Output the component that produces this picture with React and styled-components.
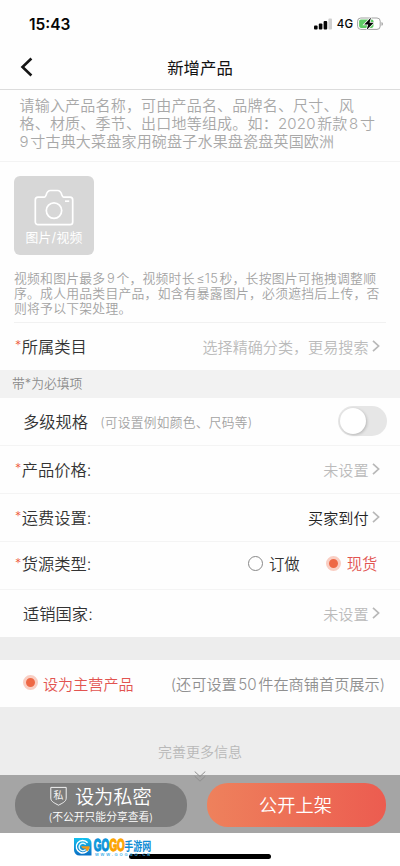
import React, { useState } from 'react';
import styled, { createGlobalStyle } from 'styled-components';

export default function App() {
  const [multi, setMulti] = useState(false);
  const [source, setSource] = useState('spot');

  return (
    <>
      <GlobalStyle />
      <Page>
        <StatusBar>
          <Time>15:43</Time>
          <StatusIcons>
            <SignalIcon />
            <Network>4G</Network>
            <BatteryIcon />
          </StatusIcons>
        </StatusBar>
        <Header>
          <BackIcon />
          <h1>新增产品</h1>
        </Header>
        <NameField>
          <p>请输入产品名称，可由产品名、品牌名、尺寸、风</p>
          <p>格、材质、季节、出口地等组成。如：2020<Gap />新款<Gap />8<Gap />寸</p>
          <p>9<Gap />寸古典大菜盘家用碗盘子水果盘瓷盘英国欧洲</p>
        </NameField>
        <Media>
          <Upload>
            <CameraIcon />
            <span>图片/视频</span>
          </Upload>
          <Hint>
            <p>视频和图片最多<Gap />9<Gap />个，视频时长<Gap />≤15<Gap />秒，长按图片可拖拽调整顺</p>
            <p>序。成人用品类目产品，如含有暴露图片，必须遮挡后上传，否</p>
            <p>则将予以下架处理。</p>
          </Hint>
        </Media>
        <Row $height={47} $noBorder>
          <Label><i>*</i>所属类目</Label>
          <Value>选择精确分类，更易搜索<ArrowIcon /></Value>
        </Row>
        <Tip>带*为必填项</Tip>
        <Row $height={48} $lift={1}>
          <Label $plain>多级规格<small>(可设置例如颜色、尺码等)</small></Label>
          <Switch $on={multi} onClick={() => setMulti(!multi)} />
        </Row>
        <Row $height={48}>
          <Label><i>*</i>产品价格:</Label>
          <Value>未设置<ArrowIcon /></Value>
        </Row>
        <Row $height={48}>
          <Label><i>*</i>运费设置:</Label>
          <Value $dark>买家到付<ArrowIcon /></Value>
        </Row>
        <Row $height={48} $lift={5}>
          <Label><i>*</i>货源类型:</Label>
          <Options>
            <Option $on={source === 'custom'} onClick={() => setSource('custom')}>
              <Radio $on={source === 'custom'} /><span>订做</span>
            </Option>
            <Option $on={source === 'spot'} onClick={() => setSource('spot')}>
              <Radio $on={source === 'spot'} /><span>现货</span>
            </Option>
          </Options>
        </Row>
        <Row $height={47} $noBorder>
          <Label $plain>适销国家:</Label>
          <Value>未设置<ArrowIcon /></Value>
        </Row>
        <MainProduct>
          <Option $on><Radio $on /><span>设为主营产品</span></Option>
          <span>(还可设置<Gap />50<Gap />件在商铺首页展示)</span>
        </MainProduct>
        <More>完善更多信息</More>
        <Actions>
          <MoreArrow />
          <PrivateButton>
            <strong><ShieldIcon />设为私密</strong>
            <span>(不公开只能分享查看)</span>
          </PrivateButton>
          <PublishButton>公开上架</PublishButton>
        </Actions>
        <Footer>
          <HomeIndicator />
          <Watermark />
        </Footer>
      </Page>
    </>
  );
}

const SignalIcon = () => (
  <svg width="18" height="12" viewBox="0 0 18 12">
    <rect x="0" y="7.4" width="3.6" height="4" rx="1" fill="#050505" />
    <rect x="4.8" y="5.4" width="3.6" height="6" rx="1" fill="#050505" />
    <rect x="9.6" y="3" width="3.6" height="8.4" rx="1" fill="#050505" />
    <rect x="14.4" y="0.4" width="3.6" height="11" rx="1" fill="#cfcfcf" />
  </svg>
);

const BatteryIcon = () => (
  <svg width="27" height="14" viewBox="0 0 27 14">
    <rect x="0.6" y="1" width="22.6" height="11.4" rx="3.2" fill="#fff" stroke="#a3a3a3" />
    <rect x="2.1" y="2.5" width="14.4" height="8.4" rx="1.8" fill="#5fcb65" />
    <path d="M24.5 5v3.8q1.4-.5 1.4-1.9T24.5 5z" fill="#999" />
    <path d="M14 .6 7.2 7.5h4L9.6 13l7.1-7.2h-4.2z" fill="#050505" stroke="#fff" strokeWidth="1.5" paintOrder="stroke" />
  </svg>
);

const BackIcon = () => (
  <svg width="14" height="20" viewBox="0 0 14 20" fill="none" stroke="#161616" strokeWidth="2.6">
    <path d="M11.4 1.5 2.5 10l8.9 8.5" />
  </svg>
);

const CameraIcon = () => (
  <svg width="40" height="38" viewBox="0 0 40 38" fill="none" stroke="#fff" strokeWidth="1.7">
    <path d="M4 8.2h6.4c1.2 0 1.3-1 1.8-2.5.9-3 1.7-4.2 4.2-4.2h7.2c2.5 0 3.3 1.2 4.2 4.2.5 1.5.6 2.5 1.8 2.5H36a2.7 2.7 0 0 1 2.7 2.7v22A2.7 2.7 0 0 1 36 35.6H4a2.7 2.7 0 0 1-2.7-2.7v-22A2.7 2.7 0 0 1 4 8.2z" />
    <circle cx="20" cy="21.6" r="7.7" />
    <path d="M31 12.2h4.2" />
  </svg>
);

const ArrowIcon = () => (
  <svg width="8" height="12" viewBox="0 0 8 12" fill="none" stroke="#b8b8b8" strokeWidth="1.7">
    <path d="m1 .8 5.6 5.2L1 11.2" />
  </svg>
);

const ShieldIcon = () => (
  <svg width="17" height="20" viewBox="0 0 17 20">
    <path d="M.8 1.4h15.4v10.8c0 3.5-4.2 5.1-7.7 7C5 17.3.8 15.7.8 12.2z" fill="none" stroke="#f2f2f2" />
    <text x="8.5" y="12.8" fill="#f2f2f2" fontSize="10" fontWeight="400" textAnchor="middle">私</text>
  </svg>
);

const Watermark = () => (
  <Logo width="80" height="22" viewBox="0 0 80 22">
    <defs>
      <linearGradient id="blue" x1="0" y1="0" x2="0" y2="1">
        <stop offset="0" stopColor="#13c0ee" />
        <stop offset="1" stopColor="#0a6fc4" />
      </linearGradient>
      <linearGradient id="gold" x1="0" y1="0" x2="0" y2="1">
        <stop offset="0" stopColor="#ffc400" />
        <stop offset="1" stopColor="#f58300" />
      </linearGradient>
    </defs>
    <path d="M1 1h12.5a5 5 0 0 1 5 5v12.5H6.5A5.5 5.5 0 0 1 1 13z" fill="url(#blue)" />
    <path d="M14.6 5.8A6.3 6.3 0 1 0 15.9 10.5" fill="none" stroke="#fff" strokeWidth="1.5" />
    <path d="M12.7 7.6A3.7 3.7 0 1 0 12.6 12.4" fill="none" stroke="#d8f7ff" strokeWidth="1.5" />
    <path d="M8 9.2h8.6c0 2.5-1 4.2-2.6 5.2l-1.5-3H9.8z" fill="#f59a16" />
    <g fontFamily="'Liberation Sans', sans-serif" fontSize="16.5" fontWeight="700">
      <text transform="translate(20.8 14.2) scale(.6 1)" fill="url(#blue)" stroke="#0d93da" strokeWidth="1.3">GO</text>
      <text transform="translate(36.4 14.2) scale(.6 1)" fill="url(#gold)" stroke="#fca400" strokeWidth="1.3">GO</text>
    </g>
    <text transform="translate(51.3 13.6) scale(.75 1)" fontSize="12" fontWeight="700" fill="#0e8bd4">手游网</text>
    <text x="22" y="18.6" fontFamily="'Liberation Sans', sans-serif" fontSize="4" fontWeight="700" textLength="55" fill="#3fb0e8">WWW.GOGGO.CN</text>
  </Logo>
);

const MoreArrow = () => (
  <DownArrow width="12" height="11" viewBox="0 0 12 11" fill="none" stroke="#8f8f8f">
    <path d="m.7.5 5.3 5 5.3-5M.7 5.2l5.3 5 5.3-5" />
  </DownArrow>
);

const GlobalStyle = createGlobalStyle`
  *{
    box-sizing: border-box;
  }
  body{
    margin: 0;
    background: #fff;
    font-family: Inter, 'Noto Sans CJK SC', sans-serif;
    font-weight: 350;
  }
  p, h1{
    margin: 0;
  }
  svg{
    display: block;
    flex: none;
  }
`

const Page = styled.div`
  width: 400px;
  height: 866px;
  overflow: hidden;
  display: flex;
  flex-direction: column;
  white-space: nowrap;
  background: #fefefe;
  > *{
    flex: none;
  }
`

const StatusBar = styled.div`
  height: 44px;
  padding: 4px 16px 0 29px;
  display: flex;
  align-items: center;
  justify-content: space-between;
  color: #050505;
`

const Time = styled.span`
  font-size: 15.5px;
  font-weight: 600;
`

const StatusIcons = styled.div`
  display: flex;
  align-items: center;
`

const Network = styled.span`
  margin: 0 4px 0 4.5px;
  font-size: 11.5px;
  font-weight: 500;
`

const Header = styled.header`
  height: 46px;
  padding: 0 20px;
  display: grid;
  grid-template-columns: 40px 1fr 40px;
  align-items: center;
  border-bottom: 1px solid #dcdcdc;
  h1{
    text-align: center;
    font-size: 16.4px;
    font-weight: 400;
    color: #111;
  }
`

const NameField = styled.div`
  height: 72px;
  padding: 7px 0 0 19.5px;
  border-bottom: 1px solid #f3f3f3;
  font-size: 15px;
  letter-spacing: .2px;
  line-height: 17.8px;
  color: #a8a8a8;
`

const Gap = styled.span`
  display: inline-block;
  width: 1.5px;
`

const Media = styled.div`
  height: 161px;
  margin: 0 14px;
  padding-top: 14px;
  border-bottom: 1px solid #f1f1f1;
`

const Upload = styled.div`
  width: 80px;
  height: 79px;
  padding-top: 13px;
  display: flex;
  flex-direction: column;
  align-items: center;
  border-radius: 6px;
  background: #d7d7d7;
  color: #fff;
  span{
    margin-top: 1.5px;
    font-size: 12.8px;
    font-weight: 400;
    line-height: 18px;
    letter-spacing: .2px;
  }
`

const Hint = styled.div`
  margin-top: 15.5px;
  font-size: 12.8px;
  letter-spacing: .26px;
  line-height: 15.3px;
  color: #a3a3a3;
`

const Row = styled.div`
  height: ${p => p.$height}px;
  padding: 0 20px 0 15px;
  padding-bottom: ${p => p.$lift ?? 2}px;
  display: flex;
  align-items: center;
  justify-content: space-between;
  border-bottom: ${p => p.$noBorder ? 'none' : '1px solid #f4f4f4'};
`

const Label = styled.div`
  display: flex;
  align-items: center;
  padding-left: ${p => p.$plain ? 8 : 0}px;
  font-size: 16.3px;
  color: #333;
  i{
    width: 6.7px;
    font-style: normal;
    font-size: 12.5px;
    color: #ee5a3a;
  }
  small{
    margin-left: 12px;
    font-size: 12.7px;
    letter-spacing: .3px;
    color: #a3a3a3;
  }
`

const Value = styled.div`
  display: flex;
  align-items: center;
  gap: 3.5px;
  font-size: 15.1px;
  color: ${p => p.$dark ? '#222' : '#bbb'};
`

const Tip = styled.div`
  height: 28px;
  padding-left: 12px;
  line-height: 27px;
  font-size: 12.8px;
  background: #f2f2f2;
  color: #8c8c8c;
`

const Switch = styled.button`
  width: 49px;
  height: 30px;
  margin-right: -7px;
  padding: 2px;
  border: none;
  border-radius: 15px;
  background: ${p => p.$on ? '#ee6a4b' : '#e6e6e6'};
  &::before{
    content: '';
    display: block;
    width: 26px;
    height: 26px;
    margin-left: ${p => p.$on ? 19 : 0}px;
    border-radius: 50%;
    background: #fff;
    box-shadow: 1px 1px 3px rgba(0, 0, 0, .2);
  }
`

const Options = styled.div`
  display: flex;
  gap: 26.5px;
  margin-right: 2.5px;
`

const Option = styled.div`
  display: flex;
  align-items: center;
  gap: 5.5px;
  font-size: 15.4px;
  color: ${p => p.$on ? '#e25450' : '#333'};
`

const Radio = styled.span`
  width: 15px;
  height: 15px;
  border-radius: 50%;
  border: ${p => p.$on ? '3px solid #f9cec3' : '1px solid #888'};
  background: ${p => p.$on ? '#ee6845' : '#fff'};
`

const MainProduct = styled.div`
  height: 70px;
  padding: 0 15px 2px 22.5px;
  border-top: 23px solid #ededed;
  display: flex;
  align-items: center;
  justify-content: space-between;
  font-size: 15.2px;
  color: #909090;
  ${Option}{
    font-size: 15.1px;
  }
`

const More = styled.div`
  height: 68px;
  padding-top: 34px;
  text-align: center;
  font-size: 14px;
  line-height: 22px;
  background: #ededed;
  color: #b8b8b8;
`

const Actions = styled.div`
  position: relative;
  height: 58px;
  padding: 8px 14px 8px 14.5px;
  display: grid;
  grid-template-columns: 172.5px 179px;
  justify-content: space-between;
  background: #a5a5a5;
`

const DownArrow = styled.svg`
  position: absolute;
  left: 194px;
  top: -4px;
`

const Button = styled.button`
  border: none;
  border-radius: 21px;
  padding: 0;
  font-family: inherit;
  font-weight: 350;
  color: #fff;
`

const PrivateButton = styled(Button)`
  display: flex;
  flex-direction: column;
  align-items: center;
  background: #7c7c7c;
  strong{
    display: flex;
    align-items: center;
    gap: 8px;
    height: 26px;
    font-size: 19.2px;
    font-weight: 350;
  }
  span{
    font-size: 10.8px;
    line-height: 18px;
  }
`

const PublishButton = styled(Button)`
  padding: 0 2px 2px 0;
  font-size: 18.2px;
  background: linear-gradient(90deg, #ee815c, #ec5c50);
`

const Footer = styled.footer`
  position: relative;
  height: 33px;
  padding-top: 20.5px;
  background: #fff;
`

const Logo = styled.svg`
  position: absolute;
  left: 73px;
  top: 4px;
  overflow: visible;
`

const HomeIndicator = styled.div`
  width: 142px;
  height: 5px;
  margin: 0 auto;
  border-radius: 3px;
  background: #000;
`
